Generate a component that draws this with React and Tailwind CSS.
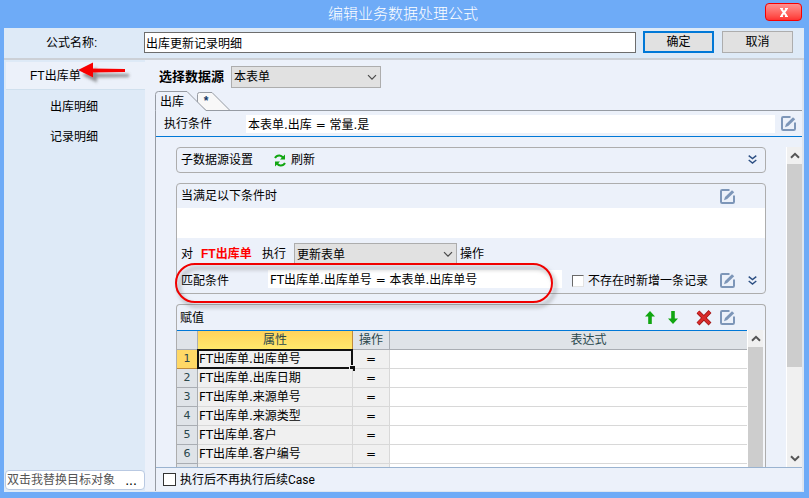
import React from "react";

const fields = ["FT出库单.出库单号", "FT出库单.出库日期", "FT出库单.来源单号", "FT出库单.来源类型", "FT出库单.客户", "FT出库单.客户编号"];

const wide = "font-['DejaVu_Sans','Noto_Sans_CJK_SC',sans-serif]";

function EditIcon() {
  return (
    <svg width="15" height="15" viewBox="0 0 15 15" fill="none" className="block">
      <path d="M9.500 1H2.200Q1 1 1 2.200V12.800Q1 14 2.200 14H12.800Q14 14 14 12.800V6.500" stroke="#7d96b8" strokeWidth="2" />
      <path d="M4 11.200l1-3.200L12 1.200 14.200 3.200 7.200 10z" fill="#7d96b8" />
    </svg>
  );
}

function EditButton({ label }) {
  return (
    <button type="button" aria-label={label} className="shrink-0">
      <EditIcon />
    </button>
  );
}

function ExpandButton({ label }) {
  return (
    <button type="button" aria-label={label} className="shrink-0">
      <svg width="9" height="9" viewBox="0 0 9 9" fill="none" stroke="#2c4f83" strokeWidth="1.4" className="block">
        <path d="M.7.6l3.8 3 3.8-3M.7 5l3.8 3 3.8-3" />
      </svg>
    </button>
  );
}

function Chevron({ up, bold }) {
  return (
    <svg width="10" height="7" viewBox="0 0 10 7" fill="none" stroke={bold ? "#555" : "#4a4a4a"} strokeWidth={bold ? 2 : 1.2} className={up ? "block rotate-180" : "block"}>
      <path d="M1 1.200l4 4 4-4" />
    </svg>
  );
}

function Select({ id, options, className }) {
  return (
    <div className={`relative h-[22px] ${className}`}>
      <select id={id} className="block h-full w-full appearance-none border border-[#adadad] bg-[#e1e1e1] pl-0.5 text-black outline-none">
        {options.map((o) => (
          <option key={o}>{o}</option>
        ))}
      </select>
      <span className="pointer-events-none absolute right-1 top-2">
        <Chevron />
      </span>
    </div>
  );
}

function ScrollBar({ thumb, down }) {
  return (
    <div className="flex w-4 shrink-0 flex-col border-l border-white bg-[#f0f0f0]">
      <div className="flex h-[17px] shrink-0 items-center justify-center">
        <Chevron up bold />
      </div>
      <div className="min-h-0 flex-1">
        <div className={`bg-[#cdcdcd] ${thumb}`} />
      </div>
      {down && (
        <div className="flex h-[17px] shrink-0 items-center justify-center">
          <Chevron bold />
        </div>
      )}
    </div>
  );
}

function Arrow({ down }) {
  return (
    <svg width="10" height="13" viewBox="0 0 10 13" className={down ? "block rotate-180" : "block"}>
      <path d="M5 0l5 5.600H6.800V13H3.200V5.600H0z" fill="#11a611" />
    </svg>
  );
}

function TitleBar() {
  return (
    <header className="relative flex h-7 shrink-0 items-center justify-center pr-0.5">
      <h1 className="text-[15px] font-light leading-5 text-white">编辑业务数据处理公式</h1>
      <button
        type="button"
        aria-label="关闭"
        className="absolute right-0.5 top-[3px] flex h-[18px] w-[37px] items-center justify-center rounded-sm border border-[#f50000] bg-linear-to-b from-[#ff9090] to-[#ff3030]"
      >
        <svg width="8" height="9" viewBox="0 0 8 9" className="block">
          <path d="M1.200 .8L6.800 8.200M6.800 .8L1.200 8.200" stroke="#fff" strokeWidth="2" />
          <path d="M0 .5H3M5 .5H8M0 8.500H3M5 8.500H8" stroke="#fff" />
        </svg>
      </button>
    </header>
  );
}

function NameBar() {
  return (
    <div className="flex h-8 shrink-0 items-start border-b-2 border-[#ccd0d6] pr-[11px] pt-[3px]">
      <label htmlFor="formula" className="w-[140px] shrink-0 pl-[42px] leading-6">公式名称:</label>
      <input id="formula" defaultValue="出库更新记录明细" className="mt-px h-[21px] min-w-0 flex-1 border border-[#6d6d6d] bg-white px-px outline-none" />
      <button type="button" className="ml-[7px] h-[22px] w-[71px] border-2 border-[#0078d7] bg-[#e1e1e1]">确定</button>
      <button type="button" className="ml-2 h-[22px] w-[71px] border border-[#adadad] bg-[#e1e1e1]">取消</button>
    </div>
  );
}

function Sidebar() {
  return (
    <aside className="flex w-[141px] shrink-0 flex-col pt-0.5">
      <nav className="relative flex flex-col pl-0.5">
        <button type="button" className="mb-0.5 h-7 border-b border-[#d0e0ee] bg-[#ecf1fa] pl-6 text-left">FT出库单</button>
        <button type="button" className="h-[30px] pl-11 text-left">出库明细</button>
        <button type="button" className="h-[30px] pl-11 text-left">记录明细</button>
        <svg width="60" height="26" viewBox="0 0 60 26" className="pointer-events-none absolute left-[72px] top-0">
          <defs>
            <filter id="soft" x="-20%" y="-40%" width="150%" height="200%">
              <feDropShadow dx="4" dy="5" stdDeviation="1.5" floodColor="#555" floodOpacity=".6" />
            </filter>
          </defs>
          <path d="M2 8L17 .5V6.500L49 7V10L17 10.500V15.500z" fill="#f80000" filter="url(#soft)" />
        </svg>
      </nav>
      <div className="mb-0.5 ml-px mt-auto flex h-5 rounded-sm border border-[#b9c9e2] bg-white">
        <input aria-label="目标对象" placeholder="双击我替换目标对象" className="min-w-0 flex-1 pl-px outline-none placeholder:text-[#555]" />
        <button type="button" className="w-6 pr-0.5 text-sm leading-4">...</button>
      </div>
    </aside>
  );
}

function Tabs() {
  return (
    <div className="mt-[3px] flex h-5 shrink-0">
      <div className="relative w-[75px] shrink-0">
        <svg width="75" height="20" viewBox="0 0 75 20" fill="none" stroke="#969ba3" className="absolute left-0 top-0">
          <path d="M42.500 12V3.500q0-2 2-2H57L75 19.500H51z" fill="#f8f8f8" />
          <path d="M.5 20V3.500q0-3 3-3H32L51 19.500H75" fill="#ecf1fa" />
          <path d="M1 20V19.500H50" stroke="#ecf1fa" />
        </svg>
        <div className="relative flex h-full">
          <button type="button" className="w-[42px] pl-[5px] text-left leading-[22px]">出库</button>
          <button type="button" className="w-[18px] font-bold text-[#123a66]">*</button>
        </div>
      </div>
      <div className="flex-1 border-b border-[#969ba3]" />
    </div>
  );
}

function DataSourceGroup() {
  return (
    <section className="flex h-[26px] shrink-0 items-center rounded border border-[#adadad] pl-1 pr-2">
      <span>子数据源设置</span>
      <button type="button" className="ml-[21px] flex items-center gap-[5px]">
        <svg width="12" height="13" viewBox="0 0 12 13" fill="none" className="block">
          <path d="M1 4Q2.500 1.300 5.500 1.500Q7.500 1.700 9 3.500M11 9Q9.500 11.700 6.500 11.500Q4.500 11.300 3 9.500" stroke="#11a611" strokeWidth="2" />
          <path d="M11 .5V5.500H6zM1 12.500V7.500H6z" fill="#11a611" />
        </svg>
        刷新
      </button>
      <div className="ml-auto">
        <ExpandButton label="展开子数据源" />
      </div>
    </section>
  );
}

function ConditionGroup() {
  return (
    <section className="relative h-[111px] shrink-0 rounded border border-[#adadad]">
      <div className="flex h-6 items-center justify-between pl-1 pr-[30px]">
        <span>当满足以下条件时</span>
        <EditButton label="编辑条件" />
      </div>
      <div className="h-[30px] bg-white" />
      <div className="flex h-[27px] items-end pl-1 leading-[22px]">
        <span>对</span>
        <strong className="ml-2 w-[52px] text-[#f00]">FT出库单</strong>
        <label htmlFor="action" className="ml-[9px]">执行</label>
        <Select id="action" options={["更新表单"]} className="ml-2 w-[163px]" />
        <span className="ml-[3px]">操作</span>
      </div>
      <div className="flex h-[27px] items-center pl-1 pr-2 pt-1">
        <label htmlFor="match" className="w-[87px] shrink-0">匹配条件</label>
        <input id="match" defaultValue="FT出库单.出库单号 = 本表单.出库单号" className={`-mt-1 h-[18px] min-w-0 flex-1 bg-white px-0.5 outline-none ${wide}`} />
        <label className="ml-2.5 flex items-center gap-1">
          <input type="checkbox" className="h-3 w-3 appearance-none border border-[#e3e3e3] border-l-[#696969] border-t-[#696969] bg-white" />
          不存在时新增一条记录
        </label>
        <div className="ml-3 flex items-center gap-[13px]">
          <EditButton label="编辑匹配条件" />
          <ExpandButton label="展开匹配条件" />
        </div>
      </div>
      <div className="pointer-events-none absolute -left-0.5 top-[79px] h-10 w-[378px] rounded-full border-2 border-[#f00000] drop-shadow-[3px_4px_2px_rgba(80,80,80,0.55)]" />
    </section>
  );
}

function AssignGroup() {
  const head = "border-b border-r border-[#a9adb3] bg-[#dfe3e8] p-0 font-normal text-[#29474c]";
  const cell = "border-b border-r border-[#d8d8d8] bg-[#f0f0f0] p-0";
  return (
    <section className="flex min-h-0 flex-1 flex-col overflow-hidden rounded-t border border-b-0 border-[#adadad]">
      <div className="flex h-[25px] shrink-0 items-center pl-[3px] pr-[30px]">
        <span>赋值</span>
        <div className="ml-auto flex items-center">
          <button type="button" aria-label="上移"><Arrow /></button>
          <button type="button" aria-label="下移" className="ml-[13px]"><Arrow down /></button>
          <button type="button" aria-label="删除" className="ml-[18px] mr-2">
            <svg width="16" height="16" viewBox="0 0 16 16" className="block">
              <path d="M2 2L14 14M14 1.500L2 14" stroke="#9c1414" strokeWidth="4" />
              <path d="M2 1.800L13.500 13.500M13.800 1.800L2.200 13.500" stroke="#d92b2b" strokeWidth="2.600" />
            </svg>
          </button>
          <EditButton label="编辑赋值" />
        </div>
      </div>
      <div className="flex min-h-0 flex-1">
        <div className="min-w-0 flex-1 overflow-hidden border-t border-[#0078d7] bg-white">
          <table className="w-full table-fixed border-separate border-spacing-0 leading-[18px]">
            <colgroup>
              <col className="w-[21px]" />
              <col className="w-[155px]" />
              <col className="w-[37px]" />
              <col />
            </colgroup>
            <thead>
              <tr className="h-[19px]">
                <th className={head} />
                <th className="border-b border-r border-[#c08a3c] bg-linear-to-b from-[#ffd35c] to-[#ffe96c] p-0 font-normal text-[#29474c]">属性</th>
                <th className={head}>操作</th>
                <th className="border-b border-[#a9adb3] bg-[#dfe3e8] p-0 pl-10 font-normal text-[#29474c]">表达式</th>
              </tr>
            </thead>
            <tbody>
              {fields.map((f, i) => (
                <tr key={f} className={`h-[19px] ${wide}`}>
                  <th className={i === 0 ? "border-b border-r border-[#c08a3c] bg-[#ffd866] p-0 text-[11px] font-normal text-[#29474c]" : `${head} text-[11px]`}>{i + 1}</th>
                  <td className={`relative ${cell}`}>
                    <span className="pl-px">{f}</span>
                    {i === 0 && (
                      <span className="absolute -inset-x-px -bottom-px -top-px border-2 border-[#111]">
                        <span className="absolute -bottom-1 -right-1 h-1.5 w-1.5 border-l border-t border-[#f0f0f0] bg-[#111]" />
                      </span>
                    )}
                  </td>
                  <td className={`text-center ${cell}`}>=</td>
                  <td className="border-b border-[#d8d8d8] bg-white p-0" />
                </tr>
              ))}
              <tr className="h-[19px]">
                <th className={head} />
                <td className={cell} />
                <td className={cell} />
                <td />
              </tr>
            </tbody>
          </table>
        </div>
        <ScrollBar thumb="h-full" />
        <div className="w-0.5 shrink-0 bg-[#f4f6fa]" />
      </div>
    </section>
  );
}

export default function App() {
  return (
    <div className="flex h-screen flex-col overflow-hidden bg-[#6eabf7] pb-1.5 pl-1 pr-[5px] font-['Liberation_Sans','Noto_Sans_CJK_SC',sans-serif] text-xs text-black">
      <TitleBar />
      <div className="flex min-h-0 flex-1 flex-col bg-[#deeaf7]">
        <NameBar />
        <div className="flex min-h-0 flex-1">
          <Sidebar />
          <main className="flex min-w-0 flex-1 flex-col border-b border-r-2 border-[#dde5f0] bg-[#ecf1fa] pl-2.5">
            <div className="mt-1.5 flex h-[22px] shrink-0 items-center pl-1">
              <label htmlFor="source" className="w-[72px] text-[13px] font-bold">选择数据源</label>
              <Select id="source" options={["本表单"]} className="w-[150px]" />
            </div>
            <Tabs />
            <div className="flex min-h-0 flex-1 flex-col border-l border-[#969ba3]">
              <div className="flex h-[26px] shrink-0 items-center border-b border-[#0078d7] pl-2 pr-1.5">
                <label htmlFor="exec" className="w-[82px] shrink-0">执行条件</label>
                <input id="exec" defaultValue="本表单.出库 = 常量.是" className={`h-[18px] min-w-0 flex-1 bg-white px-0.5 outline-none ${wide}`} />
                <div className="ml-1.5 pt-1">
                  <EditButton label="编辑执行条件" />
                </div>
              </div>
              <div className="flex min-h-0 flex-1 pt-2.5">
                <div className="flex min-w-0 flex-1 flex-col gap-2.5 px-5">
                  <DataSourceGroup />
                  <ConditionGroup />
                  <AssignGroup />
                </div>
                <ScrollBar thumb="h-[71%]" down />
              </div>
              <div className="flex h-6 shrink-0 items-center border-t border-[#9ab3d0] pl-[7px]">
                <label className="flex items-center gap-1 font-['Roboto','Noto_Sans_CJK_SC',sans-serif]">
                  <input type="checkbox" className="h-[13px] w-[13px] appearance-none border border-[#333] bg-white" />
                  执行后不再执行后续Case
                </label>
              </div>
            </div>
          </main>
        </div>
      </div>
    </div>
  );
}
